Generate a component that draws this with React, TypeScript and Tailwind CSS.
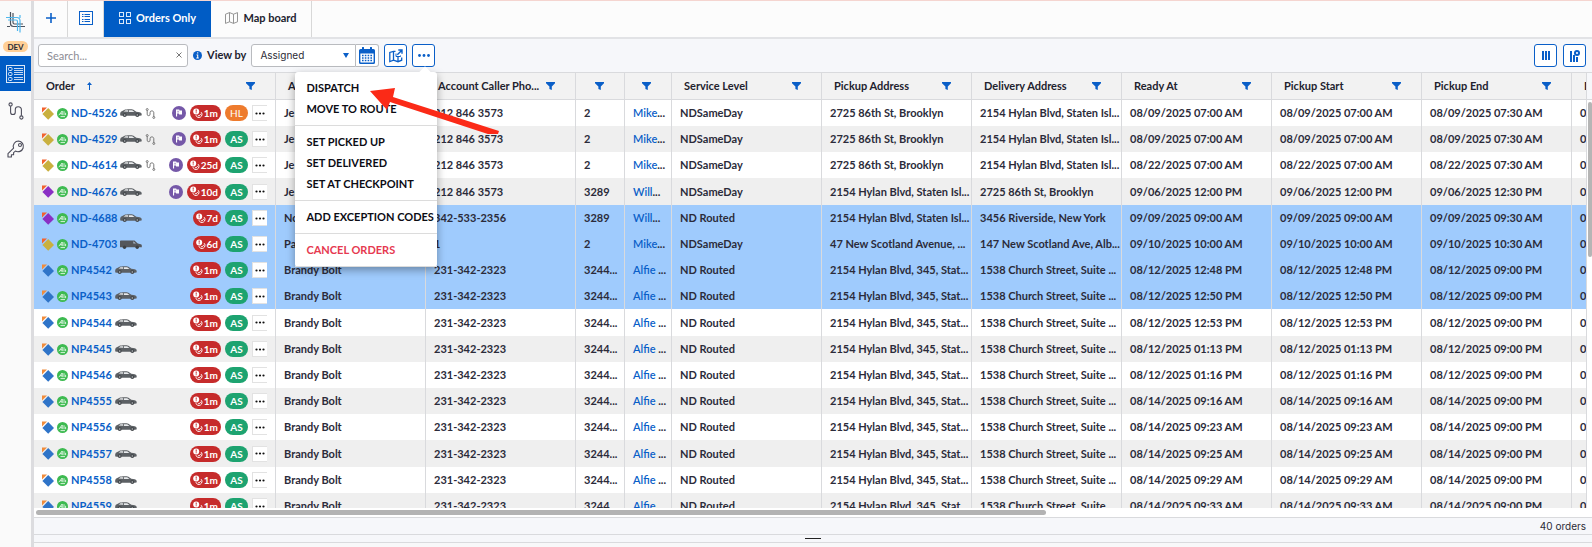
import type { ReactNode } from "react";

interface Order {
  id: string;
  color: string;
  corner: string;
  van?: boolean;
  route?: boolean;
  flag?: boolean;
  late: string;
  status: string;
  selected?: boolean;
  account: string;
  phone: string;
  ref: string;
  driver: string;
  service: string;
  pickup: string;
  delivery: string;
  ready: string;
  start: string;
  end: string;
}

const GOLD = "#c9b03f";
const PURPLE = "#8a2fc4";
const BLUE = "#2f74c8";

// NP orders only differ in their number and times
function np(id: string, date: string, time: string, selected = false): Order {
  return {
    id,
    color: BLUE,
    corner: "#f08c3c",
    late: "1m",
    status: "AS",
    selected,
    account: "Brandy Bolt",
    phone: "231-342-2323",
    ref: "3244...",
    driver: "Alfie ",
    service: "ND Routed",
    pickup: "2154 Hylan Blvd, 345, Stat...",
    delivery: "1538 Church Street, Suite ...",
    ready: `${date} ${time}`,
    start: `${date} ${time}`,
    end: `${date} 09:00 PM`,
  };
}

function nd(id: string, rest: Partial<Order>): Order {
  return {
    id,
    color: GOLD,
    corner: "#f2622e",
    late: "1m",
    status: "AS",
    account: "Je",
    phone: "212 846 3573",
    ref: "2",
    driver: "Mike",
    service: "NDSameDay",
    pickup: "2725 86th St, Brooklyn",
    delivery: "2154 Hylan Blvd, Staten Isl...",
    ready: "08/09/2025 07:00 AM",
    start: "08/09/2025 07:00 AM",
    end: "08/09/2025 07:30 AM",
    ...rest,
  };
}

const ORDERS: Order[] = [
  nd("ND-4526", { route: true, flag: true, status: "HL" }),
  nd("ND-4529", { route: true, flag: true }),
  nd("ND-4614", { route: true, flag: true, late: "25d", ready: "08/22/2025 07:00 AM", start: "08/22/2025 07:00 AM", end: "08/22/2025 07:30 AM" }),
  nd("ND-4676", { color: PURPLE, flag: true, late: "10d", ref: "3289", driver: "Will", pickup: "2154 Hylan Blvd, Staten Isl...", delivery: "2725 86th St, Brooklyn", ready: "09/06/2025 12:00 PM", start: "09/06/2025 12:00 PM", end: "09/06/2025 12:30 PM" }),
  nd("ND-4688", { color: PURPLE, late: "7d", selected: true, account: "No", phone: "342-533-2356", ref: "3289", driver: "Will", service: "ND Routed", pickup: "2154 Hylan Blvd, Staten Isl...", delivery: "3456 Riverside, New York", ready: "09/09/2025 09:00 AM", start: "09/09/2025 09:00 AM", end: "09/09/2025 09:30 AM" }),
  nd("ND-4703", { van: true, late: "6d", selected: true, account: "Pa", phone: "1", pickup: "47 New Scotland Avenue, ...", delivery: "147 New Scotland Ave, Alb...", ready: "09/10/2025 10:00 AM", start: "09/10/2025 10:00 AM", end: "09/10/2025 10:30 AM" }),
  np("NP4542", "08/12/2025", "12:48 PM", true),
  np("NP4543", "08/12/2025", "12:50 PM", true),
  np("NP4544", "08/12/2025", "12:53 PM"),
  np("NP4545", "08/12/2025", "01:13 PM"),
  np("NP4546", "08/12/2025", "01:16 PM"),
  np("NP4555", "08/14/2025", "09:16 AM"),
  np("NP4556", "08/14/2025", "09:23 AM"),
  np("NP4557", "08/14/2025", "09:25 AM"),
  np("NP4558", "08/14/2025", "09:29 AM"),
  np("NP4559", "08/14/2025", "09:33 AM"),
];

const COLUMNS = [
  { label: "Order", width: "w-[242px]" },
  { label: "A", width: "w-[150px]" },
  { label: "Account Caller Pho...", width: "w-[150px]" },
  { label: "", width: "w-[49px]" },
  { label: "", width: "w-[47px]" },
  { label: "Service Level", width: "w-[150px]" },
  { label: "Pickup Address", width: "w-[150px]" },
  { label: "Delivery Address", width: "w-[150px]" },
  { label: "Ready At", width: "w-[150px]" },
  { label: "Pickup Start", width: "w-[150px]" },
  { label: "Pickup End", width: "w-[150px]" },
  { label: "D", width: "w-[150px]" },
];

const MENU = [
  ["DISPATCH", "MOVE TO ROUTE"],
  ["SET PICKED UP", "SET DELIVERED", "SET AT CHECKPOINT"],
  ["ADD EXCEPTION CODES"],
  ["CANCEL ORDERS"],
];

function LogoIcon() {
  return (
    <svg width="20" height="21" viewBox="0 0 20 21" fill="none">
      <path d="M4.500 0v11.500a3 3 0 0 0 3 3H19M7 1v9.500a1.500 1.500 0 0 0 1.500 1.500H17M1 14.500h3" stroke="#4a525e" strokeWidth="1.200" />
      <path d="M0 5.500h11a3 3 0 0 1 3 3v12M2 8h8a1.500 1.500 0 0 1 1.500 1.500V19M14 3v3" stroke="#4fb8ee" strokeWidth="1.200" />
    </svg>
  );
}

function OrdersIcon() {
  return (
    <svg width="19" height="18" viewBox="0 0 19 18" fill="none" stroke="#dbe8f8" strokeWidth="1">
      <rect x="0.5" y="0.5" width="18" height="17" />
      <rect x="2.5" y="2.5" width="3.5" height="3" rx="1" />
      <rect x="2.5" y="7.5" width="3.5" height="3" rx="1" />
      <rect x="2.5" y="12.5" width="3.5" height="3" rx="1" />
      <path d="M8 3.500h9M8 5.500h9M8 7.500h9M8 9.500h9M8 12.500h9M8 14.500h9" strokeWidth="0.900" />
    </svg>
  );
}

function RouteIcon({ size, color, weight }: { size: number; color: string; weight: number }) {
  return (
    <svg width={size} height={size} viewBox="0 0 18 20" fill="none" stroke={color} strokeWidth={weight}>
      <circle cx="3" cy="2.800" r="1.800" />
      <circle cx="15" cy="17.200" r="1.800" />
      <path d="M3 4.700v6.600a2.600 2.600 0 0 0 5.200 0V8.400a3.200 3.200 0 0 1 3.200-3.200c2 0 3.600 1.400 3.600 3.400v6.700" />
    </svg>
  );
}

function KeyIcon() {
  return (
    <svg width="18" height="18" viewBox="0 0 18 18" fill="none" stroke="#4c4c5a" strokeWidth="1.1" strokeLinejoin="round">
      <path d="M11.6 1a5.3 5.3 0 0 0-5 7.1L1 13.7V17h3.4v-2.2h2.2v-2.2l1.8-1.5A5.4 5.4 0 1 0 11.6 1Z" />
      <circle cx="13" cy="5" r="1.5" />
    </svg>
  );
}

function ListIcon() {
  return (
    <svg width="14" height="14" viewBox="0 0 14 14" fill="none" stroke="#0a5fc8" strokeWidth="1">
      <rect x="0.5" y="0.5" width="13" height="13" />
      <path d="M3 3.500h1.500M3 5.500h1.500M3 8.500h1.500M3 10.500h1.500M5.500 3.500H11M5.500 5.500H11M5.500 8.500H11M5.500 10.500H11" />
    </svg>
  );
}

function GridIcon() {
  return (
    <svg width="12" height="12" viewBox="0 0 12 12" fill="none" stroke="#dbe8f8" strokeWidth="1">
      <rect x="0.5" y="0.5" width="4" height="4" />
      <rect x="7.5" y="0.5" width="4" height="4" />
      <rect x="0.5" y="7.5" width="4" height="4" />
      <rect x="7.5" y="7.5" width="4" height="4" />
    </svg>
  );
}

function MapIcon() {
  return (
    <svg width="13" height="12" viewBox="0 0 13 12" fill="none" stroke="#8a8a8a" strokeWidth="0.9" strokeLinejoin="round">
      <path d="M.5 2.200 4.500.600l4 1.600 4-1.600v9.200l-4 1.600-4-1.600-4 1.600ZM4.500.600v9.200M8.500 2.200v9.200" />
    </svg>
  );
}

function FilterIcon() {
  return (
    <svg width="9" height="8" viewBox="0 0 9 8" className="shrink-0">
      <path d="M0 0h9v1.200L5.800 4.400V8L3.400 7V4.400L0 1.200Z" fill="#0a5fc8" />
    </svg>
  );
}

function CalendarIcon() {
  return (
    <svg width="16" height="17" viewBox="0 0 16 17">
      <path d="M0 3.600A1.600 1.600 0 0 1 1.600 2H3V.8a.8.8 0 0 1 2 0V2h6V.8a.8.8 0 0 1 2 0V2h1.400A1.600 1.600 0 0 1 16 3.600V15.400A1.600 1.600 0 0 1 14.400 17H1.600A1.600 1.600 0 0 1 0 15.400Z" fill="#0a5fc8" />
      <path d="M1.400 6.500h13.200v8.200a.9.900 0 0 1-.9.900H2.300a.9.900 0 0 1-.9-.9Z" fill="#fff" />
      <path d="M3 8.500h10M3 11h10M3 13.500h10" stroke="#0a5fc8" strokeWidth="1.500" strokeDasharray="1.600 1.200" />
    </svg>
  );
}

function MapExportIcon() {
  return (
    <svg width="14" height="14" viewBox="0 0 14 14" fill="none" stroke="#0a5fc8" strokeWidth="1.300">
      <path d="M6.500 2.300H4.500L.8 3.500v9l3.700-1.300 4.500 1.500 3.700-1.500V8.500M4.500 2.300v9M9 8v4.500" />
      <path d="M8.300 5.700 12.600 1.400M9.300 1h3.700v3.700" strokeWidth="1.400" />
      <path d="M7 4.500v3h4.500V6.500" strokeWidth="1" />
    </svg>
  );
}

function ColumnsIcon() {
  return (
    <svg width="8" height="9" viewBox="0 0 8 9">
      <path d="M0 0h2v9H0zM3 0h2v9H3zM6 0h2v9H6z" fill="#0a5fc8" />
    </svg>
  );
}

function ColumnsResetIcon() {
  return (
    <svg width="10" height="12" viewBox="0 0 10 12">
      <path d="M0 1h2v11H0zM3 5h2v7H3zM6 7h2v5H6z" fill="#0a5fc8" />
      <circle cx="7" cy="3" r="3" fill="#0a5fc8" />
      <path d="m6 2 2 2m0-2L6 4" stroke="#fff" strokeWidth="0.800" />
    </svg>
  );
}

function Car() {
  return (
    <svg width="22" height="8" viewBox="0 0 22 8">
      <path d="M.3 6.400C0 5 .2 3.300.9 2.700L4.600.7C6 .2 11.600 0 13 .6L16.300 2.800c2.500.2 4.700.8 5.200 1.700.3.700.3 1.600 0 2L19.800 6.800H2Z" fill="#5c6064" />
      <path d="M3.600 2.600 5.500 1.300h2.700v1.500ZM9 1.300h3.200l2.300 1.600H9Z" fill="#e8eaec" />
      <circle cx="4.700" cy="6" r="2" fill="#44484c" />
      <circle cx="17.300" cy="6" r="2" fill="#44484c" />
      <circle cx="4.700" cy="6" r=".8" fill="#b9bcbf" />
      <circle cx="17.300" cy="6" r=".8" fill="#b9bcbf" />
    </svg>
  );
}

function Van() {
  return (
    <svg width="22" height="9" viewBox="0 0 22 9">
      <path d="M0 1.200C0 .6.300.4.900.4h13.600l3.300 3 3 .8c.8.300 1 .8 1 1.400v1.600H0Z" fill="#54575c" />
      <path d="M13.300 1.200 16 3.600h-2.700Z" fill="#aab8c8" />
      <circle cx="4.500" cy="7.200" r="1.700" fill="#3c4044" />
      <circle cx="17.200" cy="7.200" r="1.700" fill="#3c4044" />
    </svg>
  );
}

function Diamond({ color, corner }: { color: string; corner: string }) {
  return (
    <svg width="12" height="13" viewBox="0 0 12 13">
      <path d="M0 .5h5L0 5.500Z" fill={corner} />
      <path d="m6.200 1 5.800 5.900-5.800 5.900L.4 6.900Z" fill={color} />
    </svg>
  );
}

function GreenBadge() {
  return (
    <svg width="11" height="11" viewBox="0 0 11 11" fill="none">
      <circle cx="5.500" cy="5.500" r="5.500" fill="#3dba50" />
      <path d="M1.800 7.200 5.200 3v4.200M3.200 5.800h2M7 3.200v4M8.600 4.800v2.400M3.500 8.600h4.500" stroke="#fff" strokeWidth="0.800" />
    </svg>
  );
}

function FlagBadge() {
  return (
    <svg width="14" height="14" viewBox="0 0 14 14">
      <circle cx="7" cy="7" r="7" fill="#7558a8" />
      <path d="M4 3.500h3.200l.4.900H10v4.100H7.200l-.4-.9H5.100v3H4Z" fill="#fff" />
      <path d="M5.200 4.700h1.500l.4.900v.9H5.200Z" fill="#7558a8" opacity="0.5" />
    </svg>
  );
}

function LateIcon() {
  return (
    <svg width="10" height="11" viewBox="0 0 10 11" fill="none">
      <circle cx="3.200" cy="3.400" r="3" fill="#fff" />
      <path d="M3.200 1.500v2.200M3.200 4.300v.9" stroke="#c62b2b" strokeWidth="1" />
      <path d="M8.100 4.200a3.100 3.100 0 1 1-5.200 3" stroke="#fff" strokeWidth="1" />
      <path d="m4.800 7 1.100 1 2.200-2.300" stroke="#fff" strokeWidth="0.900" />
    </svg>
  );
}

function Dots({ color = "#111", wide = false }: { color?: string; wide?: boolean }) {
  return (
    <svg width={wide ? 12 : 10} height="3" viewBox={wide ? "0 0 12 3" : "0 0 10 3"} fill={color}>
      <circle cx="1.500" cy="1.500" r={wide ? 1.400 : 1.100} />
      <circle cx={wide ? 6 : 5} cy="1.500" r={wide ? 1.400 : 1.100} />
      <circle cx={wide ? 10.500 : 8.500} cy="1.500" r={wide ? 1.400 : 1.100} />
    </svg>
  );
}

function ToolButton({ label, children }: { label: string; children: ReactNode }) {
  return (
    <button aria-label={label} className="flex h-[23px] w-[23px] items-center justify-center rounded-[3px] border border-[#0a5fc8] bg-white">
      {children}
    </button>
  );
}

function Sidebar() {
  return (
    <nav className="flex w-[34px] shrink-0 flex-col border-r-[3px] border-[#dcdcdf] bg-[#fafafa]">
      <a href="#home" aria-label="Home" className="flex h-10 items-end justify-center pb-2">
        <LogoIcon />
      </a>
      <span className="mx-[3px] mb-1 flex h-[11px] items-center justify-center rounded-full bg-[#ffcf96] text-[8px] font-bold text-[#2b2b36]">DEV</span>
      <a href="#orders" aria-label="Orders" className="flex h-[35px] items-center justify-center bg-[#005cc5]">
        <OrdersIcon />
      </a>
      <a href="#routes" aria-label="Routes" className="flex h-10 items-center justify-center">
        <RouteIcon size={18} color="#4c4c5a" weight={1.2} />
      </a>
      <a href="#keys" aria-label="Keys" className="flex h-9 items-center justify-center">
        <KeyIcon />
      </a>
    </nav>
  );
}

function TabBar() {
  return (
    <div className="flex h-[38px] shrink-0 border-b-2 border-[#e2e3e6] bg-[#fcfcfc] text-[11px] font-bold">
      <button aria-label="New tab" className="flex w-[34px] items-center justify-center border-r border-[#d8d8d8] pb-0.5">
        <svg width="10" height="10" viewBox="0 0 10 10" stroke="#0a5fc8" strokeWidth="1.600">
          <path d="M5 0v10M0 5h10" />
        </svg>
      </button>
      <button aria-label="List" className="flex w-9 items-center justify-center border-r border-[#d8d8d8] pb-0.5">
        <ListIcon />
      </button>
      <button className="flex w-[107px] items-center justify-center gap-[5px] bg-[#005cc5] pb-0.5 text-white">
        <GridIcon />
        Orders Only
      </button>
      <button className="flex w-[101px] items-center justify-center gap-[5px] border-r border-[#d8d8d8] pb-0.5 text-[#22222e]">
        <MapIcon />
        Map board
      </button>
    </div>
  );
}

function OrderMenu() {
  return (
    <div role="menu" className="absolute top-7 -right-[2px] z-20 w-[142px] rounded-[3px] bg-white text-[11px] font-bold text-[#0c0c14] shadow-[0_3px_8px_rgba(0,0,0,0.35)]">
      <div className="absolute -top-1 right-2 h-2 w-2 rotate-45 bg-white" />
      {MENU.map((group) => (
        <div key={group[0]} className="flex flex-col border-b border-[#dcdcdc] pt-[6px] pb-[5px] last:border-b-0">
          {group.map((item) => (
            <button
              key={item}
              role="menuitem"
              className={`h-[21px] px-[11px] text-left whitespace-nowrap ${item === "CANCEL ORDERS" ? "text-[#e63950]" : ""}`}
            >
              {item}
            </button>
          ))}
        </div>
      ))}
      {/* pointer to the dispatch entry */}
      <svg width="130" height="46" viewBox="0 0 130 46" className="pointer-events-none absolute top-4 left-[74px]" fill="#fb2a17">
        <path d="M1 3 26 0l-2 9 106 34-2 6-107-35-3 8Z" />
      </svg>
    </div>
  );
}

function Toolbar() {
  return (
    <div className="flex h-[33px] shrink-0 items-center justify-between bg-[#f6f7fa] pr-[6px] pl-1">
      <div className="flex items-center gap-[5px]">
        <div className="relative">
          <input
            aria-label="Search"
            placeholder="Search..."
            className="block h-[23px] w-[150px] rounded-[3px] border border-[#b9bbbf] bg-white px-2 text-[11px] placeholder:text-[#8c8c94]"
          />
          <button aria-label="Clear" className="absolute top-0 right-1 flex h-[22px] w-[10px] items-center justify-center">
            <svg width="6" height="6" viewBox="0 0 6 6" stroke="#777" strokeWidth="1">
              <path d="m.5.5 5 5m0-5-5 5" />
            </svg>
          </button>
        </div>
        <svg width="9" height="9" viewBox="0 0 9 9">
          <circle cx="4.500" cy="4.500" r="4.500" fill="#0a5fc8" />
          <path d="M4.700 1.300v1.300M3.500 4h1.200v3M3.300 7h2.500" stroke="#fff" strokeWidth="1.100" />
        </svg>
        <label htmlFor="view-by" className="text-[11px] font-bold text-[#22222e]">
          View by
        </label>
        <div className="flex">
          <div className="relative">
            <select
              id="view-by"
              className="block h-[23px] w-[105px] appearance-none rounded-l-[3px] border border-[#b9bbbf] bg-white px-2 font-['Inter',sans-serif] text-[10px] text-[#2b2b36]"
            >
              <option>Assigned</option>
            </select>
            <svg width="6" height="5" viewBox="0 0 6 5" className="pointer-events-none absolute top-[9px] right-[7px]">
              <path d="M0 0h6L3 5Z" fill="#0a5fc8" />
            </svg>
          </div>
          <button aria-label="Pick date" className="flex h-[23px] w-[23px] items-center justify-center rounded-r-[3px] border border-l-0 border-[#b9bbbf] bg-white">
            <CalendarIcon />
          </button>
        </div>
        <ToolButton label="Export map">
          <MapExportIcon />
        </ToolButton>
        <div className="relative">
          <ToolButton label="More actions">
            <Dots color="#0a5fc8" wide />
          </ToolButton>
          <OrderMenu />
        </div>
      </div>
      <div className="flex items-center gap-[6px]">
        <ToolButton label="Columns">
          <ColumnsIcon />
        </ToolButton>
        <ToolButton label="Reset columns">
          <ColumnsResetIcon />
        </ToolButton>
      </div>
    </div>
  );
}

function OrderCell({ order }: { order: Order }) {
  return (
    <div className="flex items-center justify-between">
      <div className="flex items-center gap-[3px]">
        <Diamond color={order.color} corner={order.corner} />
        <GreenBadge />
        <a href={`#${order.id}`} className="text-[#0a5fc8]">
          {order.id}
        </a>
        {order.van ? <Van /> : <Car />}
        {order.route && <RouteIcon size={11} color="#666" weight={1.6} />}
      </div>
      <div className="flex items-center gap-1 text-[10px]">
        {order.flag && <FlagBadge />}
        <span className="flex h-4 items-center gap-px rounded-full bg-[#c62b2b] px-[3px] text-white">
          <LateIcon />
          {order.late}
        </span>
        <span
          className={`flex h-4 w-[23px] items-center justify-center rounded-full text-white ${
            order.status === "HL" ? "bg-[#ee7b2d] font-normal" : "bg-[#1da370]"
          }`}
        >
          {order.status}
        </span>
        <button aria-label={`Actions for ${order.id}`} className="flex h-4 w-[15px] items-center justify-center border border-r-0 border-[#e2e2e2] bg-white">
          <Dots />
        </button>
      </div>
    </div>
  );
}

function Cell({ children }: { children: ReactNode }) {
  return <td className="overflow-hidden border-r border-[#d9dadd] py-0 pl-2 whitespace-nowrap">{children}</td>;
}

function OrdersTable() {
  return (
    <div className="min-w-0 flex-1 overflow-hidden">
      <table className="w-[1688px] table-fixed border-separate border-spacing-0 text-[11px] leading-4 font-bold">
        <thead>
          <tr className="h-7">
            {COLUMNS.map((c, i) => (
              <th key={i} className={`border-y border-r border-[#d9dadd] bg-[#f2f2f2] py-0 pr-5 pl-3 text-left text-[#22222e] ${c.width}`}>
                <div className="flex items-center justify-between">
                  <span className="whitespace-nowrap">{c.label}</span>
                  {i === 0 && (
                    <svg width="5" height="8" viewBox="0 0 5 8" className="mr-auto ml-3" fill="#0a5fc8">
                      <path d="M2.500 0 5 3H3v5H2V3H0Z" />
                    </svg>
                  )}
                  <FilterIcon />
                </div>
              </th>
            ))}
          </tr>
        </thead>
        <tbody className="text-[#2b2b3a]">
          {ORDERS.map((o) => (
            <tr key={o.id} className={`h-[26px] nth-[5n+4]:h-[27px] ${o.selected ? "bg-[#9fcbfd]" : "odd:bg-white even:bg-[#efefef]"}`}>
              <td className="border-r border-[#d9dadd] py-0 pr-2 pl-2">
                <OrderCell order={o} />
              </td>
              <Cell>{o.account}</Cell>
              <Cell>{o.phone}</Cell>
              <Cell>{o.ref}</Cell>
              <Cell>
                <a href={`#driver-${o.id}`} className="font-semibold whitespace-pre text-[#0a5fc8]">{o.driver}</a>...
              </Cell>
              <Cell>{o.service}</Cell>
              <Cell>{o.pickup}</Cell>
              <Cell>{o.delivery}</Cell>
              <Cell>{o.ready}</Cell>
              <Cell>{o.start}</Cell>
              <Cell>{o.end}</Cell>
              <Cell>0</Cell>
            </tr>
          ))}
        </tbody>
      </table>
    </div>
  );
}

export default function App() {
  return (
    <div className="flex h-screen flex-col overflow-hidden border-t border-[#f5d5d0] bg-[#f6f7fa] font-['Lato',sans-serif]">
      <div className="flex min-h-0 flex-1">
        <Sidebar />
        <main className="flex min-w-0 flex-1 flex-col">
          <TabBar />
          <Toolbar />
          <div className="flex min-h-0 flex-1">
            <OrdersTable />
            <div className="w-[6px] shrink-0 border-t border-l border-[#d9dadd] bg-white">
              <div className="h-[27px] border-b border-[#d9dadd] bg-[#f6f7fa]" />
              <div className="mt-[2px] ml-px h-[155px] rounded-full bg-[#b5b5b5]" />
            </div>
          </div>
          <div className="h-[9px] shrink-0 bg-white px-[2px] pt-[2px]">
            <div className="h-[5px] w-[65%] rounded-full bg-[#b3b3b3]" />
          </div>
          <footer className="flex h-[18px] shrink-0 items-center justify-end border-y border-[#d9dadd] pr-[6px] font-['Inter',sans-serif] text-[10px] text-[#2b2b36]">
            40 orders
          </footer>
          <div className="flex h-2 shrink-0 items-center justify-center border-b border-[#d9dadd]">
            <div className="h-px w-4 bg-[#222]" />
          </div>
          <div className="h-1 shrink-0 bg-[#f8f8f9]" />
        </main>
      </div>
    </div>
  );
}
